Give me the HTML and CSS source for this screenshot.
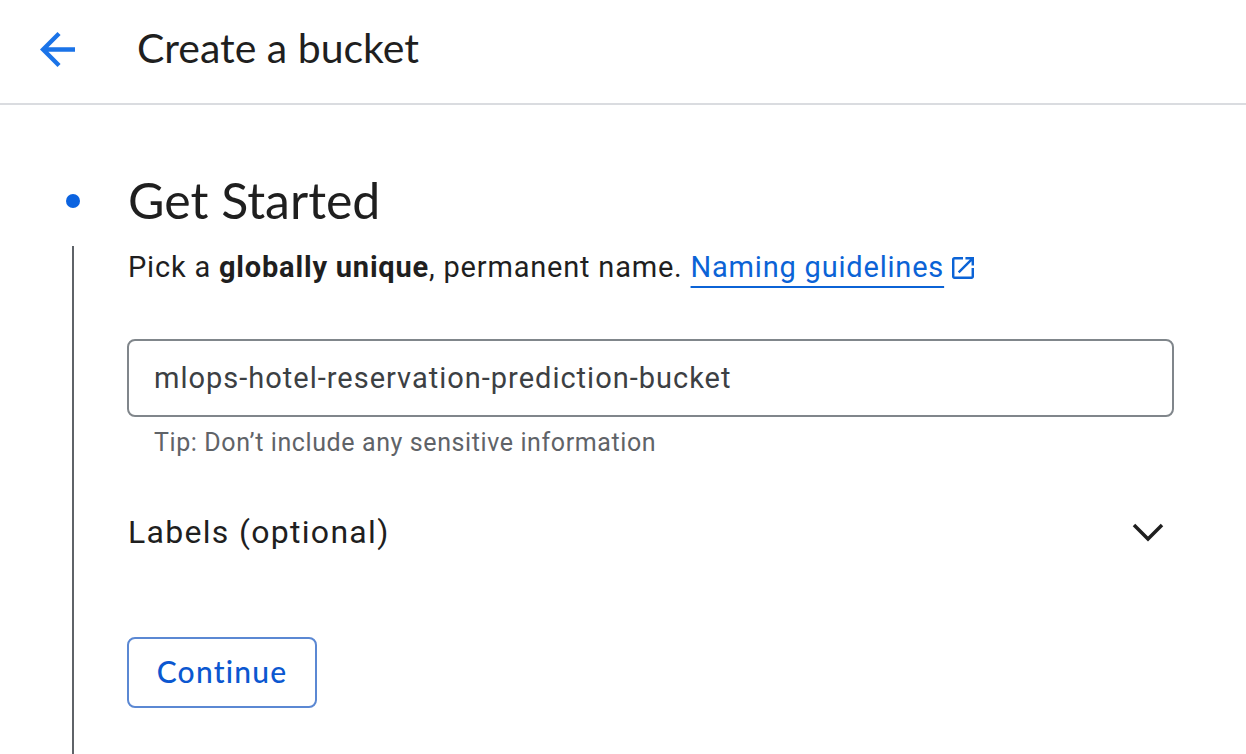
FILE: index.html
```html
<!DOCTYPE html>
<html lang="en">
<head>
<meta charset="utf-8">
<title>Create a bucket</title>
<link rel="stylesheet" href="styles.css">
</head>
<body>
<div class="page">
  <header class="topbar">
    <button class="back" aria-label="Back">
      <svg class="back-icon" viewBox="4 4 16 16" width="35" height="35" aria-hidden="true">
        <path d="M20 11H7.83l5.59-5.59L12 4l-8 8 8 8 1.41-1.41L7.83 13H20v-2z"/>
      </svg>
    </button>
    <h1 class="page-title">Create a bucket</h1>
  </header>

  <main class="step">
    <div class="rail-head"><span class="dot"></span></div>
    <h2 class="step-title">Get Started</h2>

    <div class="rail"><span class="rail-line"></span></div>
    <div class="step-body">
      <p class="intro">Pick a <b>globally unique</b>, permanent name. <a class="link" href="#">Naming guidelines</a><svg class="ext-icon" viewBox="3 3 18 18" width="22" height="22" aria-hidden="true"><path d="M19 19H5V5h7V3H5c-1.11 0-2 .9-2 2v14c0 1.1.89 2 2 2h14c1.1 0 2-.9 2-2v-7h-2v7zM14 3v2h3.59l-9.83 9.83 1.41 1.41L19 6.41V10h2V3h-7z"/></svg></p>

      <div class="field">
        <input class="field-input" type="text" value="mlops-hotel-reservation-prediction-bucket">
      </div>
      <p class="tip">Tip: Don’t include any sensitive information</p>

      <div class="labels-row">
        <span class="labels-text">Labels (optional)</span>
        <svg class="chevron" viewBox="0 0 34 22" width="34" height="22" aria-hidden="true">
          <polyline points="3,3 17,17 31,3"/>
        </svg>
      </div>

      <button class="continue">Continue</button>
    </div>
  </main>
</div>
</body>
</html>
```

FILE: styles.css
```css
html, body {
  margin: 0;
  padding: 0;
  background: #ffffff;
}

.page {
  height: 100vh;
  overflow: hidden;
  font-family: Roboto, "Liberation Sans", sans-serif;
  color: #1f1f1f;
}

.topbar {
  height: 103px;
  border-bottom: 2px solid #dadce0;
  display: flex;
  align-items: center;
  box-sizing: content-box;
}

.back {
  border: 0;
  background: none;
  padding: 0;
  margin: -4px 0 0 39px;
  width: 36px;
  height: 36px;
  display: flex;
  align-items: center;
  justify-content: center;
  cursor: pointer;
}

.back-icon {
  fill: #1a73e8;
  display: block;
}

.page-title {
  margin: -7px 0 0 62px;
  font-family: Lato, "Open Sans", sans-serif;
  font-weight: 400;
  font-size: 41px;
  line-height: 48px;
  color: #1f1f1f;
}

.step {
  display: grid;
  grid-template-columns: 128px 1fr;
  grid-template-rows: auto 1fr;
  padding-top: 67px;
}

.rail-head {
  display: flex;
  align-items: center;
}

.dot {
  width: 14px;
  height: 14px;
  border-radius: 50%;
  background: #0b63e0;
  margin-left: 66px;
}

.step-title {
  margin: 0;
  font-family: Lato, "Open Sans", sans-serif;
  font-weight: 400;
  font-size: 50px;
  line-height: 57px;
  color: #1f1f1f;
}

.rail {
  display: flex;
}

.rail-line {
  width: 2px;
  margin-left: 72px;
  margin-top: 17px;
  background: #5f6368;
}

.step-body {
  width: 1046px;
  padding-bottom: 200px;
}

.intro {
  margin: 18px 0 0;
  font-size: 29px;
  letter-spacing: 0.8px;
  line-height: 40px;
}

.intro b {
  font-weight: 700;
}

.link {
  color: #0b63d6;
  text-decoration: underline;
  text-decoration-thickness: 2px;
  text-underline-offset: 9px;
}

.ext-icon {
  fill: #0b63d6;
  margin-left: 8px;
  vertical-align: -2px;
}

.field {
  margin-top: 52px;
  width: 1047px;
}

.field-input {
  display: block;
  width: 100%;
  height: 78px;
  box-sizing: border-box;
  border: 2px solid #80868b;
  border-radius: 8px;
  padding: 0 25px;
  margin-left: -1px;
  font-family: Roboto, "Liberation Sans", sans-serif;
  font-size: 29px;
  letter-spacing: 1px;
  color: #3c4043;
  background: #fff;
  outline: none;
}

.tip {
  margin: 10px 0 0 26px;
  font-size: 25px;
  letter-spacing: 0.6px;
  line-height: 32px;
  color: #5f6368;
}

.labels-row {
  margin-top: 53px;
  width: 1046px;
  display: flex;
  align-items: center;
  justify-content: space-between;
  height: 40px;
}

.labels-text {
  font-size: 32px;
  letter-spacing: 1.3px;
  line-height: 40px;
  color: #1f1f1f;
}

.chevron {
  fill: none;
  stroke: #1f1f1f;
  stroke-width: 3.5;
  margin-right: 9px;
  margin-top: 2px;
}

.continue {
  margin-top: 85px;
  margin-left: -1px;
  width: 190px;
  height: 71px;
  box-sizing: border-box;
  border: 2px solid #5b88d3;
  border-radius: 8px;
  padding: 0 0 3px;
  background: #fff;
  color: #0b57d0;
  font-family: Lato, "Open Sans", sans-serif;
  font-weight: 500;
  font-size: 30px;
  letter-spacing: 1.2px;
  cursor: pointer;
  display: block;
}
```
